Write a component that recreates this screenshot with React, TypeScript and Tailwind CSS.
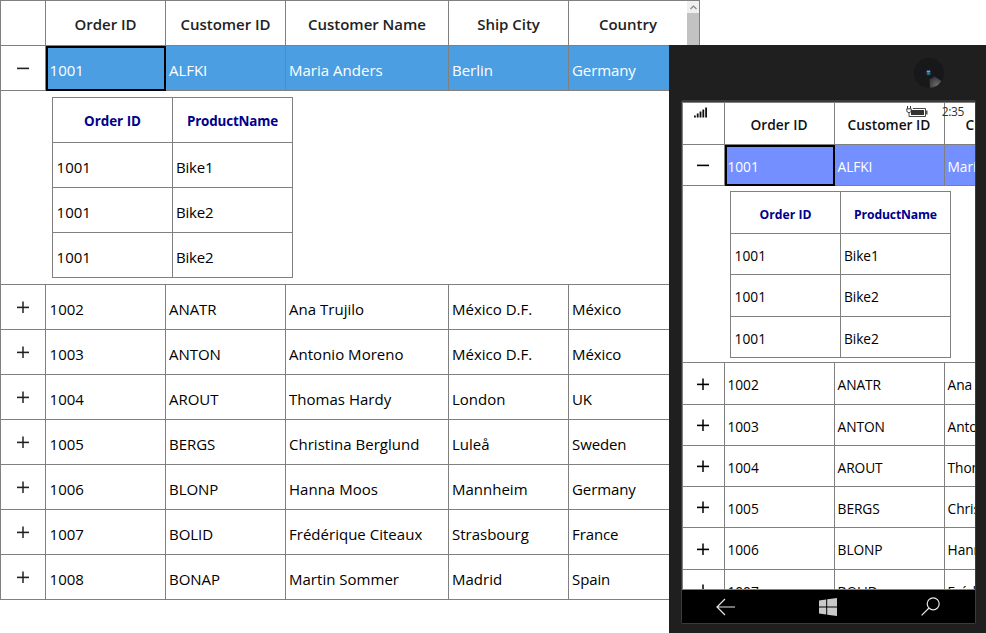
import React from "react";
import clsx from "clsx";

type Order = { id: string; customer: string; name: string; city: string; country: string };

const orders: Order[] = [
  { id: "1001", customer: "ALFKI", name: "Maria Anders", city: "Berlin", country: "Germany" },
  { id: "1002", customer: "ANATR", name: "Ana Trujilo", city: "México D.F.", country: "México" },
  { id: "1003", customer: "ANTON", name: "Antonio Moreno", city: "México D.F.", country: "México" },
  { id: "1004", customer: "AROUT", name: "Thomas Hardy", city: "London", country: "UK" },
  { id: "1005", customer: "BERGS", name: "Christina Berglund", city: "Luleå", country: "Sweden" },
  { id: "1006", customer: "BLONP", name: "Hanna Moos", city: "Mannheim", country: "Germany" },
  { id: "1007", customer: "BOLID", name: "Frédérique Citeaux", city: "Strasbourg", country: "France" },
  { id: "1008", customer: "BONAP", name: "Martin Sommer", city: "Madrid", country: "Spain" },
];

const products = [
  ["1001", "Bike1"],
  ["1001", "Bike2"],
  ["1001", "Bike2"],
];

const headers = ["Order ID", "Customer ID", "Customer Name", "Ship City", "Country"];

const selected =
  "border-r-black border-b-black shadow-[inset_2px_2px_0_0_#000,inset_-1px_-1px_0_0_#000]";

function Expander({ open, className }: { open?: boolean; className?: string }) {
  return (
    <svg viewBox="0 0 12 12" className={clsx("h-3 w-3", className)} fill="none" stroke="currentColor">
      <path d="M0 6.4H12" strokeWidth="1.6" />
      {!open && <path d="M6 0.5V12" strokeWidth="1.5" />}
    </svg>
  );
}

function Details({ phone }: { phone?: boolean }) {
  const cols = phone ? "grid-cols-[110px_110px]" : "grid-cols-[120px_120px]";
  const cell = "flex items-center border-r border-b border-[#808080]";
  return (
    <div className={clsx("border-t border-l border-[#808080]", phone ? "w-[221px]" : "w-[241px]")}>
      <div
        className={clsx(
          "grid font-bold text-[#00008b]",
          cols,
          phone ? "h-[42px] text-[12.2px]" : "h-[45px] text-[13.4px]",
        )}
      >
        {["Order ID", "ProductName"].map((h) => (
          <div
            key={h}
            className={clsx(
              cell,
              "justify-center",
              phone ? "pt-[5px]" : "pt-[3px]",
              h === "Order ID" ? "tracking-[0px]" : "tracking-[-0.15px]",
            )}
          >
            {h}
          </div>
        ))}
      </div>
      {products.map((row, i) => (
        <div key={i} className={clsx("grid", cols, phone ? (i === 1 ? "h-[42px]" : "h-[41px]") : "h-[45px]")}>
          {row.map((v, c) => (
            <div
              key={v}
              className={clsx(
                cell,
                phone ? "pt-[4px]" : "pt-[5px]",
                c === 0 ? "pl-[3.6px] tracking-[0px]" : "pl-[3px]",
              )}
            >
              {v}
            </div>
          ))}
        </div>
      ))}
    </div>
  );
}

const desktopTracking = [
  "pl-[3.6px] tracking-[0px]",
  "pl-[3px] tracking-[-0.05px]",
  "pl-[3px] tracking-[0.02px]",
  "pl-[3px] tracking-[0px]",
  "pl-[3px] tracking-[-0.1px]",
];

function DesktopGrid() {
  const cols = "grid-cols-[45px_120px_120px_163px_120px_131px]";
  const cell = "flex items-center border-r border-b border-[#808080]";
  return (
    <div className="w-[700px] border-t border-l border-[#808080] text-[15px] tracking-[-0.2px]">
      <div className={clsx("grid h-[45px] font-semibold tracking-[-0.02px] text-[#222]", cols)}>
        <div className={cell} />
        {headers.slice(0, 4).map((h) => (
          <div key={h} className={clsx(cell, "justify-center pt-[3px]")}>
            {h}
          </div>
        ))}
        <div className="flex border-r border-[#808080]">
          <div className="flex flex-1 items-center justify-center border-b border-[#808080] pt-[3px]">{headers[4]}</div>
          <div className="flex w-3 flex-col bg-[#c2c2c2]">
            <div className="flex h-3 items-center justify-center bg-[#f0f0f0]">
              <svg viewBox="0 0 7 5" className="h-[5px] w-[7px]" fill="none" stroke="#858585" strokeWidth="1.2">
                <path d="M0.5 4L3.5 1L6.5 4" />
              </svg>
            </div>
          </div>
        </div>
      </div>
      {orders.map((o, i) => (
        <React.Fragment key={o.id}>
          <div className={clsx("grid h-[45px]", cols)}>
            <div className={clsx(cell, "justify-center")}>
              <Expander open={i === 0} className="text-[#222]" />
            </div>
            {[o.id, o.customer, o.name, o.city, o.country].map((v, c) => (
              <div
                key={c}
                className={clsx(
                  cell,
                  "pt-[5px] whitespace-nowrap",
                  desktopTracking[c],
                  i === 0 && "bg-[#4c9ee3] text-white",
                  i === 0 && c === 0 && selected,
                )}
              >
                {v}
              </div>
            ))}
          </div>
          {i === 0 && (
            <div className="h-[194px] border-b border-[#808080] pt-[6px] pl-[51px]">
              <Details />
            </div>
          )}
        </React.Fragment>
      ))}
    </div>
  );
}

const phoneRowHeights = ["h-[41px]", "h-[42px]", "h-[41px]", "h-[41px]", "h-[41px]", "h-[42px]", "h-[41px]"];

function PhoneGrid() {
  const cols = "grid-cols-[42px_110px_110px_160px]";
  const cell = "flex items-center border-r border-b border-[#808080]";
  return (
    <div className="w-[423px] border-t border-l border-[#808080] bg-white text-[13.75px] tracking-[-0.1px]">
      <div className={clsx("grid h-[42px] font-semibold tracking-[0px] text-[#111]", cols)}>
        <div className={cell} />
        {headers.slice(0, 2).map((h) => (
          <div key={h} className={clsx(cell, "justify-center pt-[3px] pr-[1px]")}>
            {h}
          </div>
        ))}
        <div className={clsx(cell, "pt-[3px] pl-[20.5px]")}>{headers[2]}</div>
      </div>
      {orders.slice(0, 7).map((o, i) => (
        <React.Fragment key={o.id}>
          <div className={clsx("grid", cols, phoneRowHeights[i])}>
            <div className={clsx(cell, "justify-center pr-[1px]")}>
              <Expander open={i === 0} className="text-black" />
            </div>
            {[o.id, o.customer, o.name].map((v, c) => (
              <div
                key={c}
                className={clsx(
                  cell,
                  "pt-[4px] pl-[2.6px] whitespace-nowrap",
                  i === 0 && "bg-[#748fff] text-white",
                  i === 0 && c === 0 && selected,
                )}
              >
                {v}
              </div>
            ))}
          </div>
          {i === 0 && (
            <div className="h-[177px] border-b border-[#808080] pt-[5px] pl-[47px]">
              <Details phone />
            </div>
          )}
        </React.Fragment>
      ))}
    </div>
  );
}

function StatusBar() {
  return (
    <div className="absolute top-[3px] right-0 left-0 flex h-[14px] items-center pr-[11px] pl-[12px] text-[12px] leading-[14px] text-[#333]">
      <svg viewBox="0 0 14 11" className="h-[11px] w-[14px]" fill="#111">
        <rect x="0" y="8.5" width="1.8" height="2" />
        <rect x="2.8" y="6.5" width="1.8" height="4" />
        <rect x="5.6" y="4.5" width="1.8" height="6" />
        <rect x="8.4" y="2.5" width="1.8" height="8" />
        <rect x="11.2" y="0.5" width="1.8" height="10" />
      </svg>
      <svg viewBox="0 0 22 12" className="mr-[14px] ml-auto h-3 w-[22px]" fill="none" stroke="#333">
        <path d="M1.5 0V2.5M4.5 0V2.5" />
        <path d="M0.8 2.8H5.2V4.5C5.2 6 4.2 6.5 3 6.5S0.8 6 0.8 4.5Z" />
        <path d="M3 6.5V10.5H19.5V2.5H6.8" strokeWidth="0.9" />
        <path d="M20.8 4.5V8.5" strokeWidth="1.3" />
        <rect x="5" y="4" width="13" height="5" fill="#333" stroke="none" />
      </svg>
      <span className="tracking-[-0.4px]">2:35</span>
    </div>
  );
}

function Phone() {
  return (
    <div className="absolute top-[45px] left-[669px] flex h-[588px] w-[317px] flex-col bg-[#1f1f1f]">
      <div className="flex h-[55px] justify-end pt-[13px] pr-[42px]">
        <svg viewBox="0 0 30 30" className="h-[30px] w-[30px]">
          <defs>
            <radialGradient id="glint" gradientUnits="userSpaceOnUse" cx="23" cy="27" r="12">
              <stop offset="0" stopColor="#6a6a6a" />
              <stop offset="1" stopColor="#222326" />
            </radialGradient>
          </defs>
          <circle cx="15" cy="15" r="15" fill="#17181a" />
          <path d="M15 15L27.5 23A15 15 0 0 1 16 30Z" fill="url(#glint)" />
          <circle cx="15" cy="15" r="6" fill="#17191d" />
          <circle cx="14.5" cy="15" r="2.8" fill="#1d2c45" />
          <rect x="12.8" y="12.6" width="3.4" height="1.5" fill="#a58bd0" />
          <rect x="13.2" y="14.2" width="2.6" height="2.4" fill="#168f9a" />
        </svg>
      </div>
      <div className="ml-3 flex h-[524px] w-[295px] flex-col rounded-[2px] border border-t-2 border-[#3b3b3b]">
        <div className="relative h-[488px] overflow-hidden border-b border-[#808080]">
          <PhoneGrid />
          <StatusBar />
        </div>
        <div className="flex flex-1 items-center justify-between bg-black pr-[35px] pl-[34px]">
          <svg viewBox="0 0 19 18" className="h-[18px] w-[19px]" fill="none" stroke="#e6e6e6" strokeWidth="1.2">
            <path d="M19 9H1M9 1L1 9L9 17" />
          </svg>
          <svg viewBox="0 0 18 18" className="h-[18px] w-[18px]" fill="#c9c9c9">
            <path d="M0 2.4L7.2 1.4V8.4H0ZM8.2 1.2L18 0V8.4H8.2ZM0 9.6H7.2V16.6L0 15.6ZM8.2 9.6H18V18L8.2 16.8Z" />
          </svg>
          <svg viewBox="0 0 19 19" className="h-[19px] w-[19px]" fill="none" stroke="#e6e6e6" strokeWidth="1.2">
            <circle cx="12.2" cy="6.8" r="6" />
            <path d="M8 11L0.6 18.4" />
          </svg>
        </div>
      </div>
    </div>
  );
}

export default function App() {
  return (
    <div className="relative h-[633px] w-[986px] overflow-hidden bg-white font-['Open_Sans','Noto_Sans',sans-serif] text-black">
      <DesktopGrid />
      <Phone />
    </div>
  );
}
